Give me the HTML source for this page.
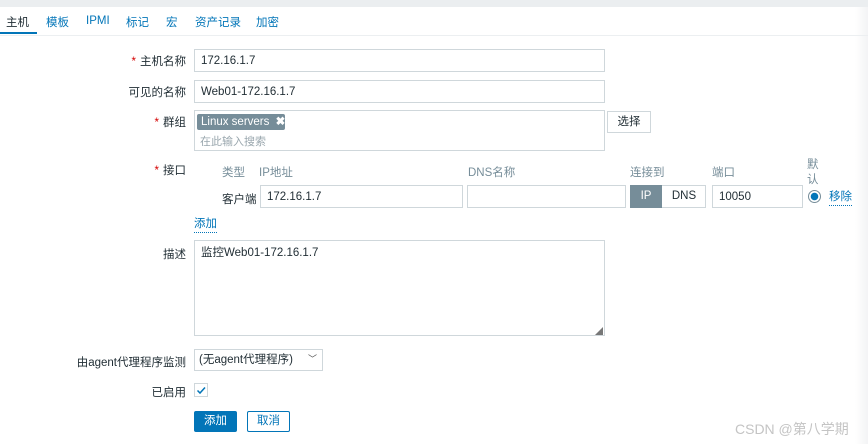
<!DOCTYPE html>
<html><head><meta charset="utf-8"><style>
*{margin:0;padding:0;box-sizing:border-box}
body{width:868px;height:444px;background:#fff;font-family:"Liberation Sans","Noto Sans CJK SC",sans-serif;font-size:11.5px;color:#1f2c33;position:relative;overflow:hidden}
.a{position:absolute;white-space:nowrap}
.in{position:absolute;border:1px solid #cfd7db;background:#fff;padding-left:6px;line-height:23px;font-size:11.5px}
.lbl{position:absolute;right:682px;text-align:right}
.r{color:#d40000;margin-right:4px}
.tab{position:absolute;top:14px;color:#0275b8}
.hd{color:#768d99}
</style></head><body>
<div class="a" style="left:0;top:0;width:868px;height:7px;background:#ebeef0"></div>
<div class="a" style="left:855px;top:7px;width:13px;height:437px;background:linear-gradient(90deg,#fff,#f3f4f5)"></div>
<div class="a" style="left:0;top:35px;width:868px;height:1px;background:#eceff1"></div>
<div class="tab" style="left:6px;color:#1f2c33">主机</div>
<div class="a" style="left:0;top:32px;width:37px;height:2px;background:#0275b8"></div>
<div class="tab" style="left:46px">模板</div>
<div class="tab" style="left:86px;top:15px">IPMI</div>
<div class="tab" style="left:126px">标记</div>
<div class="tab" style="left:166px">宏</div>
<div class="tab" style="left:195px">资产记录</div>
<div class="tab" style="left:256px">加密</div>

<div class="lbl" style="top:53px"><span class="r">*</span>主机名称</div>
<div class="in" style="left:194px;top:49px;width:411px;height:23px">172.16.1.7</div>
<div class="lbl" style="top:84px">可见的名称</div>
<div class="in" style="left:194px;top:80px;width:411px;height:23px">Web01-172.16.1.7</div>
<div class="lbl" style="top:114px"><span class="r">*</span>群组</div>
<div class="in" style="left:194px;top:110px;width:411px;height:41px"></div>
<div class="a" style="left:197px;top:114px;width:88px;height:16px;background:#768d99;color:#fff;line-height:16px;padding-left:4px;border-radius:2px">Linux servers <b style="margin-left:3px">✖</b></div>
<div class="a" style="left:200px;top:133px;color:#9aa7ae;font-size:11px">在此输入搜索</div>
<div class="a" style="left:607px;top:111px;width:44px;height:22px;border:1px solid #cfd7db;text-align:center;line-height:20px">选择</div>

<div class="lbl" style="top:162px"><span class="r">*</span>接口</div>
<div class="a hd" style="left:222px;top:164px">类型</div>
<div class="a hd" style="left:259px;top:164px">IP地址</div>
<div class="a hd" style="left:468px;top:164px">DNS名称</div>
<div class="a hd" style="left:630px;top:164px">连接到</div>
<div class="a hd" style="left:712px;top:164px">端口</div>
<div class="a hd" style="left:807px;top:156px">默</div>
<div class="a hd" style="left:807px;top:171px">认</div>
<div class="a" style="left:222px;top:191px">客户端</div>
<div class="in" style="left:260px;top:185px;width:203px;height:23px">172.16.1.7</div>
<div class="in" style="left:467px;top:185px;width:159px;height:23px"></div>
<div class="a" style="left:630px;top:185px;width:76px;height:23px;border:1px solid #cfd7db"></div>
<div class="a" style="left:630px;top:185px;width:32px;height:23px;background:#768d99;color:#fff;text-align:center;line-height:23px">IP</div>
<div class="a" style="left:662px;top:185px;width:44px;text-align:center;line-height:23px">DNS</div>
<div class="in" style="left:712px;top:185px;width:91px;height:23px">10050</div>
<div class="a" style="left:808px;top:190px;width:13px;height:13px;border:1px solid #768d99;border-radius:50%;background:radial-gradient(circle,#0275b8 3.5px,#fff 4px)"></div>
<div class="a" style="left:829px;top:190px;color:#0275b8;border-bottom:1px dotted #0275b8;line-height:15px">移除</div>
<div class="a" style="left:194px;top:217px;color:#0275b8;border-bottom:1px dotted #0275b8;line-height:15px">添加</div>

<div class="lbl" style="top:246px">描述</div>
<div class="in" style="left:194px;top:240px;width:411px;height:96px;line-height:24px">监控Web01-172.16.1.7</div>
<div class="a" style="left:595px;top:326px;color:#777;font-size:8px">◢</div>

<div class="lbl" style="top:354px">由agent代理程序监测</div>
<div class="in" style="left:194px;top:349px;width:129px;height:22px;line-height:20px;padding-left:4px">(无agent代理程序)<span style="position:absolute;right:5px;top:-1px;font-size:9px;color:#555">﹀</span></div>
<div class="lbl" style="top:384px">已启用</div>
<div class="a" style="left:194px;top:383px;width:14px;height:14px;border:1px solid #cfd7db"><svg width="12" height="12" style="position:absolute;left:0;top:0"><path d="M2.5 6.5L5 9L10 3.5" fill="none" stroke="#0275b8" stroke-width="1.5"/></svg></div>
<div class="a" style="left:194px;top:411px;width:43px;height:21px;background:#0275b8;color:#fff;text-align:center;line-height:21px;border-radius:2px">添加</div>
<div class="a" style="left:247px;top:411px;width:43px;height:21px;border:1px solid #0275b8;color:#0275b8;text-align:center;line-height:19px;border-radius:2px">取消</div>
<div class="a" style="left:735px;top:419px;color:#c4c4c4;font-size:14px">CSDN @第八学期</div>
</body></html>
